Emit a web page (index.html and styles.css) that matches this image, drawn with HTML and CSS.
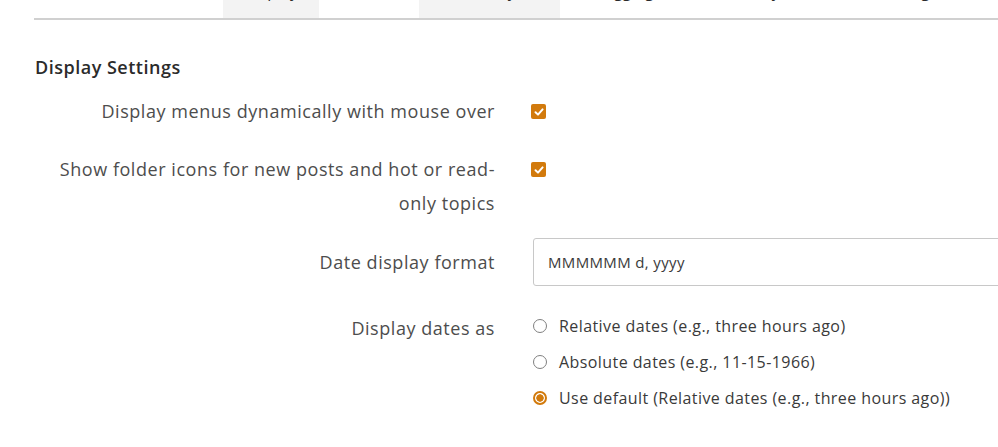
FILE: index.html
```html
<!DOCTYPE html>
<html>
<head>
<meta charset="utf-8">
<link rel="stylesheet" href="styles.css">
</head>
<body>
<div class="tabs">
  <div class="tab t1">Personal Profile</div>
  <div class="tab t2 active">Display</div>
  <div class="tab t3">Email</div>
  <div class="tab t4 active">Privacy</div>
  <div class="tab t5">Tagging</div>
  <div class="tab t6">Security</div>
  <div class="tab t7">Ranking</div>
</div>
<div class="content">
  <h2 class="heading">Display Settings</h2>
  <div class="row r1">
    <div class="label">Display menus dynamically with mouse over</div>
    <div class="control"><span class="check"><svg viewBox="0 0 14 14" width="14" height="14"><path d="M3.5 7.2 L6 9.6 L10.6 4.4" fill="none" stroke="#fff" stroke-width="2" stroke-linecap="round" stroke-linejoin="round"/></svg></span></div>
  </div>
  <div class="row r2">
    <div class="label">Show folder icons for new posts and hot or read-<br>only topics</div>
    <div class="control"><span class="check"><svg viewBox="0 0 14 14" width="14" height="14"><path d="M3.5 7.2 L6 9.6 L10.6 4.4" fill="none" stroke="#fff" stroke-width="2" stroke-linecap="round" stroke-linejoin="round"/></svg></span></div>
  </div>
  <div class="row r3">
    <div class="label">Date display format</div>
    <div class="control"><div class="input">MMMMMM d, yyyy</div></div>
  </div>
  <div class="row r4">
    <div class="label">Display dates as</div>
    <div class="control radios">
      <div class="opt"><span class="radio"></span><span>Relative dates (e.g., three hours ago)</span></div>
      <div class="opt"><span class="radio"></span><span>Absolute dates (e.g., 11-15-1966)</span></div>
      <div class="opt"><span class="radio on"></span><span>Use default (Relative dates (e.g., three hours ago))</span></div>
    </div>
  </div>
</div>
</body>
</html>
```
FILE: styles.css
```css
html, body {
  margin: 0;
  padding: 0;
  background: #fff;
  font-family: "Open Sans", Lato, sans-serif;
  color: #4a4a4a;
  overflow: hidden;
}
.tabs {
  display: flex;
  margin-left: 34px;
  margin-top: -33px;
  height: 51px;
  border-bottom: 2px solid #d0d0d0;
}
.tab {
  font-size: 16px;
  line-height: 48px;
  color: #2b2b2b;
  text-align: center;
  box-sizing: border-box;
}
.tab.active { background: #f3f3f3; }
.t1 { width: 189px; }
.t2 { width: 96px; }
.t3 { width: 100px; }
.t4 { width: 141px; }
.t5 { width: 130px; }
.t6 { width: 120px; }
.t7 { width: 180px; }
.content {
  padding-left: 34px;
}
.heading {
  margin: 35px 0 0 1px;
  font-size: 18px;
  font-weight: 600;
  letter-spacing: 0.5px;
  line-height: 24px;
  color: #2b2b2b;
}
.row {
  display: grid;
  grid-template-columns: 461px 1fr;
  column-gap: 36px;
}
.label {
  text-align: right;
  font-size: 18px;
  letter-spacing: 0.55px;
  line-height: 34px;
  color: #4d4d4d;
}
.r1 { margin-top: 15px; }
.r2 { margin-top: 24px; }
.r3 { margin-top: 18px; }
.r4 { margin-top: 25px; }
.control { display: flex; align-items: flex-start; }
.r1 .control, .r2 .control { padding-top: 10px; }
.check {
  width: 15px;
  height: 15px;
  border-radius: 2px;
  background: #d27a0c;
  display: inline-flex;
  align-items: center;
  justify-content: center;
}
.r3 .label { line-height: 48px; }
.input {
  box-sizing: border-box;
  margin-left: 2px;
  width: 480px;
  height: 48px;
  border: 1px solid #c8c8c8;
  border-radius: 3px;
  padding: 0 14px;
  font-size: 15px;
  letter-spacing: 0.35px;
  line-height: 46px;
  color: #3a3a3a;
}
.radios { flex-direction: column; margin-left: 2px; margin-top: -3px; }
.opt {
  display: flex;
  align-items: center;
  height: 36px;
  font-size: 16px;
  letter-spacing: 0.42px;
  color: #3a3a3a;
}
.radio {
  box-sizing: border-box;
  width: 14px;
  height: 14px;
  border-radius: 50%;
  border: 1.5px solid #808080;
  margin-right: 12px;
  flex: none;
}
.radio.on {
  border: 2px solid #d27a0c;
  background: radial-gradient(circle, #d27a0c 0 3.4px, #fff 4px);
}
```
